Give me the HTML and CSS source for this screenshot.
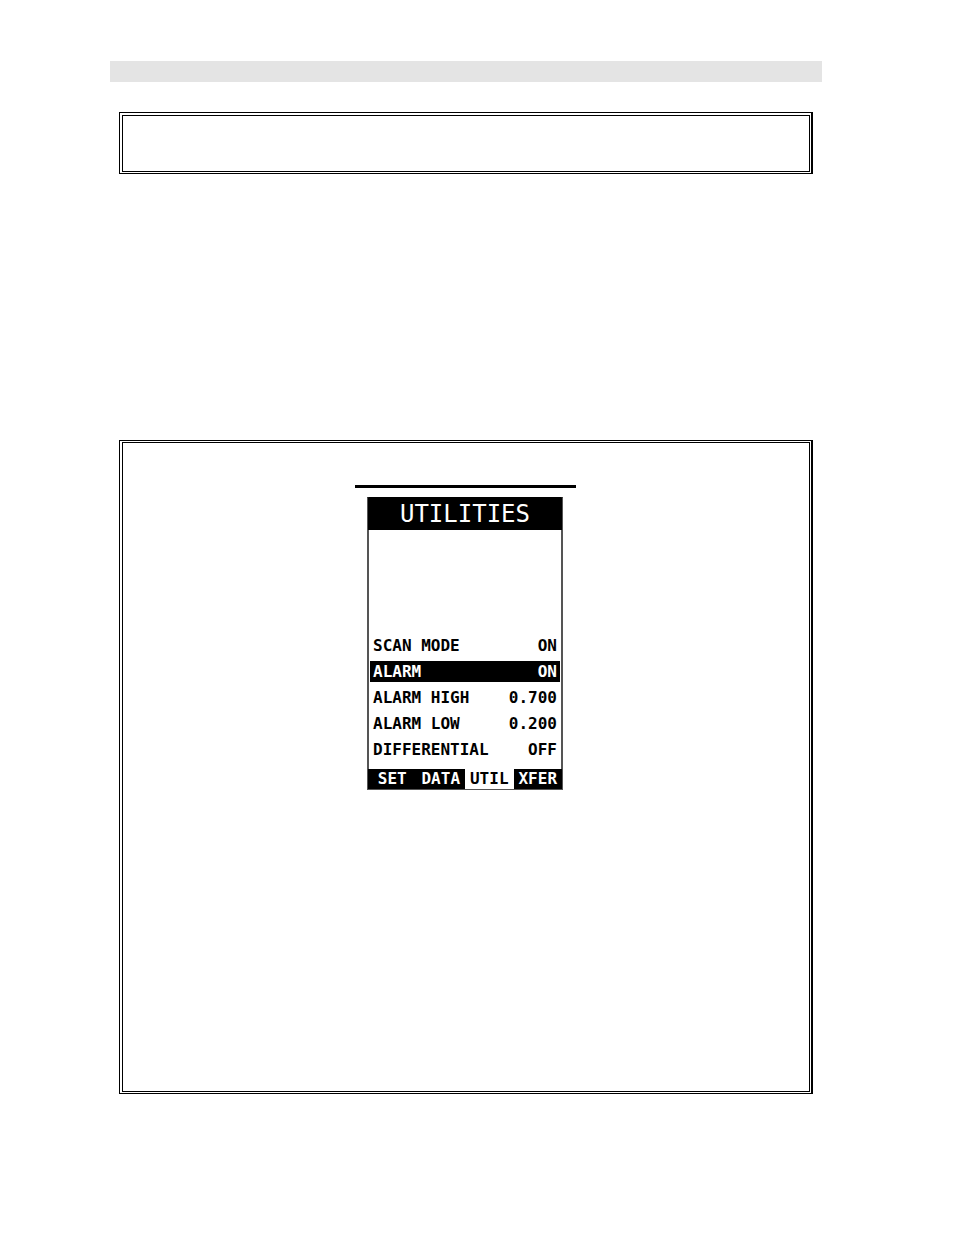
FILE: index.html
```html
<!DOCTYPE html>
<html lang="en">
  <head>
    <meta charset="UTF-8" />
    <title>Utilities</title>
    <meta name="viewport" content="width=device-width, initial-scale=1" />
    <link rel="stylesheet" href="styles.css">
  </head>
  <body>
    <main class="page">
      <div class="header-bar"></div>

      <div class="frame note">
        <div class="frame-inner"></div>
      </div>

      <section class="frame panel">
        <div class="frame-inner">
          <hr class="rule" />

          <div class="device">
            <h1 class="title">UTILITIES</h1>
            <table class="settings">
              <tr><th scope="row">SCAN MODE</th><td>ON</td></tr>
              <tr class="selected"><th scope="row">ALARM</th><td>ON</td></tr>
              <tr><th scope="row">ALARM HIGH</th><td>0.700</td></tr>
              <tr><th scope="row">ALARM LOW</th><td>0.200</td></tr>
              <tr><th scope="row">DIFFERENTIAL</th><td>OFF</td></tr>
            </table>
            <nav class="tabs">
              <button type="button">SET</button>
              <button type="button">DATA</button>
              <button type="button" class="active">UTIL</button>
              <button type="button">XFER</button>
            </nav>
          </div>
        </div>
      </section>
    </main>
  </body>
</html>
```
FILE: styles.css
```css
* {
  box-sizing: border-box;
}
body {
  margin: 0;
  background: #fff;
  color: #000;
  font-family: "DejaVu Sans Mono", "Liberation Mono", monospace;
}
.page {
  padding: 61px 132px 140px 110px;
}
.header-bar {
  height: 21px;
  background: #e4e4e4;
}

/* double outline, heavier on the right */
.frame {
  display: flex;
  margin: 0 9px;
  padding: 2px 1px 1px 2px;
  border: 1px solid #000;
  border-right-width: 2px;
}
.frame-inner {
  flex: 1;
  border: 1px solid #000;
}
.note {
  min-height: 62px;
  margin-top: 30px;
}
.panel {
  min-height: 654px;
  margin-top: 266px;
  padding-top: 1px;
}
.panel .frame-inner {
  padding: 42px 2px 0 0;
}
.rule {
  width: 221px;
  height: 3px;
  margin: 0 auto 9px;
  border: 0;
  background: #000;
}

.device {
  width: 196px;
  margin: 0 auto;
  border: 1px solid #000;
  border-width: 1px 2px;
  border-color: #000 #555 #555;
}
.title {
  margin: 0 -1px;
  background: #000;
  color: #fff;
  font-size: 24px;
  font-weight: normal;
  line-height: 32px;
  text-align: center;
}
.settings {
  width: 100%;
  margin: 100px 0 4px;
  padding: 0 1px;
  border-spacing: 0 5px;
  font-size: 16px;
  font-weight: bold;
  line-height: 21px;
}
.settings th,
.settings td {
  padding: 0 3px;
}
.settings th {
  text-align: left;
}
.settings td {
  text-align: right;
}
.selected {
  background: #000;
  color: #fff;
}
.tabs {
  display: flex;
  margin: 0 -1px;
}
.tabs button {
  flex: 1;
  padding: 0;
  border: 0;
  background: #000;
  color: #fff;
  font: bold 16px/20px "DejaVu Sans Mono", "Liberation Mono", monospace;
}
.tabs .active {
  background: #fff;
  color: #000;
}
```
